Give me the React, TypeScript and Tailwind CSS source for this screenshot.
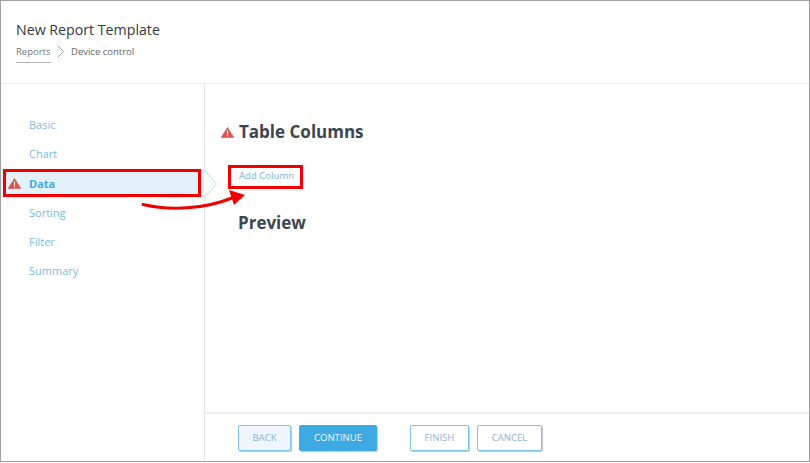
import React from "react";

const font = { fontFamily: '"Open Sans", "Noto Sans", sans-serif' };

function Warn({ size = 13 }: { size?: number }) {
  return (
    <svg width={size} height={size - 2} viewBox="0 0 13 11" className="shrink-0">
      <path d="M6.5 0.4 L12.8 10.6 L0.2 10.6 Z" fill="#d9534f" stroke="#d9534f" strokeWidth="0.6" strokeLinejoin="round" />
      <rect x="5.9" y="3.4" width="1.2" height="4" fill="#fff" />
      <rect x="5.9" y="8.2" width="1.2" height="1.2" fill="#fff" />
    </svg>
  );
}

const items = ["Basic", "Chart", "Data", "Sorting", "Filter", "Summary"];

export default function App() {
  return (
    <div className="relative w-[810px] h-[463px] bg-white overflow-hidden" style={font}>
      <div className="flex flex-col w-[810px] h-[462px] border border-[#a0a0a0]">
        <header className="h-[83px] shrink-0 border-b border-[#ececec] pl-[15px] pt-[19px]">
          <h1 className="text-[14.2px] leading-[20px] text-[#333a42]">New Report Template</h1>
          <div className="flex items-start mt-[5px] text-[9.5px] leading-[14px] text-[#6f7780]">
            <span className="border-b border-[#b5b5b5] pb-[3px] w-[35px] whitespace-nowrap">Reports</span>
            <svg width="20" height="14" viewBox="0 0 20 14" className="shrink-0">
              <path d="M7 1 L12.5 6.5 L7 12" fill="none" stroke="#9aa0a6" strokeWidth="1" />
            </svg>
            <span className="text-[#5f6770]">Device control</span>
          </div>
        </header>
        <div className="flex flex-1 min-h-0">
          <aside className="relative w-[204px] shrink-0 border-r border-[#e3e6e8] pt-[26.6px]">
            {items.map((t) => (
              <div
                key={t}
                className={
                  t === "Data"
                    ? "relative flex items-center h-[29.3px] pl-[7px] bg-[#e3f1fb] text-[11px] font-bold text-[#45ace2]"
                    : "flex items-center h-[29.3px] pl-[28px] text-[11px] text-[#7cbbe8]"
                }
              >
                {t === "Data" ? (
                  <>
                    <Warn />
                    <span className="ml-[8px]">{t}</span>
                  </>
                ) : (
                  t
                )}
              </div>
            ))}
          </aside>
          <main className="flex flex-col flex-1 min-w-0">
            <div className="flex-1 pl-[16px] pt-[36px]">
              <div className="flex items-center gap-[5px]">
                <Warn size={13} />
                <h2 className="text-[17px] leading-[24px] font-bold text-[#3c4650]">Table Columns</h2>
              </div>
              <div className="mt-[25px] pl-[18px] text-[9.6px] leading-[14px] text-[#7cb0e0]">Add Column</div>
              <h2 className="mt-[28px] pl-[17px] text-[17px] leading-[24px] font-bold text-[#3c4650]">Preview</h2>
            </div>
            <footer className="h-[49px] shrink-0 border-t-2 border-[#efefef] flex items-start pt-[11px] pl-[33px] text-[9.6px]">
              <button className="w-[53px] h-[26px] rounded-[2px] border border-[#7cc4ea] bg-[#f0f4fd] text-[#8fb4dc] shadow-[1px_1px_1px_#c0c8d0]">BACK</button>
              <button className="ml-[8px] w-[78px] h-[26px] rounded-[2px] bg-[#3faae2] text-[#e8f5fc] font-medium shadow-[1px_1px_1px_#c0c8d0]">CONTINUE</button>
              <button className="ml-[33px] w-[59px] h-[26px] rounded-[2px] border border-[#7cc4ea] bg-white text-[#8fb4dc] shadow-[1px_1px_1px_#c0c8d0]">FINISH</button>
              <button className="ml-[8px] w-[65px] h-[26px] rounded-[2px] border border-[#7cc4ea] bg-white text-[#8fb4dc] shadow-[1px_1px_1px_#c0c8d0]">CANCEL</button>
            </footer>
          </main>
        </div>
      </div>

      {/* annotations over the screenshot */}
      <svg width="810" height="463" viewBox="0 0 810 463" className="absolute left-0 top-0 pointer-events-none">
        <path d="M204.5 170 L216.5 184 L204.5 198" fill="#fafdff" stroke="#bcdcf4" strokeWidth="1" />
        <path d="M143 204.5 C170 211 205 209 232 198" fill="none" stroke="#f00000" strokeWidth="3" strokeLinecap="round" />
        <path d="M229 190 L245 195 L234 205 Z" fill="#f00000" />
      </svg>
      <div className="absolute left-[3px] top-[169px] w-[198px] h-[28px] border-[3px] border-[#f00000]" />
      <div className="absolute left-[228px] top-[165px] w-[75px] h-[24px] border-[3px] border-[#f00000]" />
    </div>
  );
}
